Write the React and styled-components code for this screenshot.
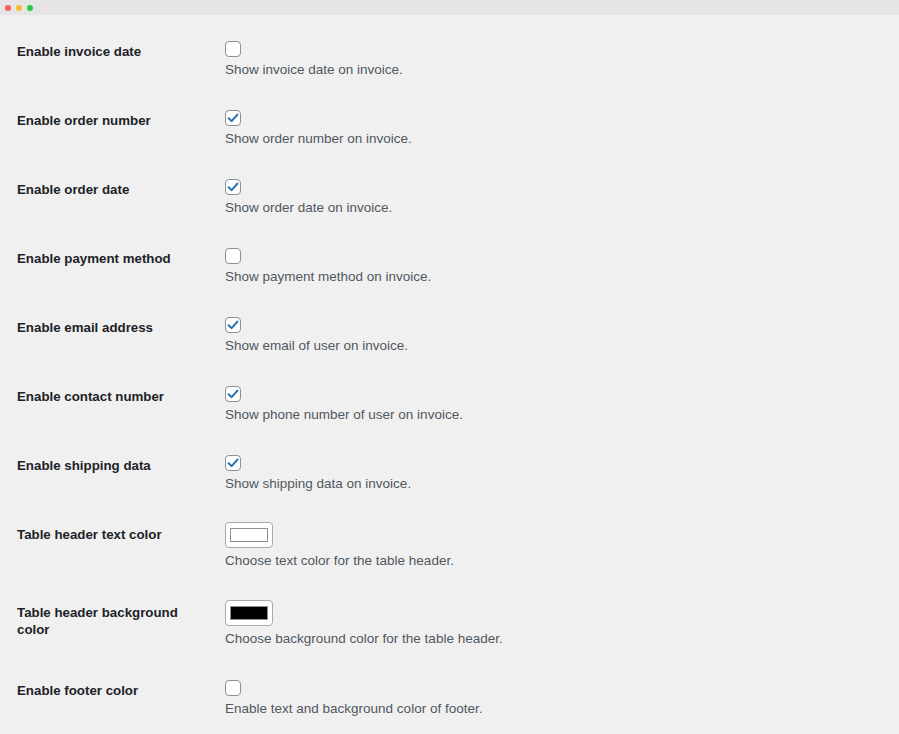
import React from "react";
import styled, { createGlobalStyle } from "styled-components";

const GlobalStyle = createGlobalStyle`
  html, body {
    margin: 0;
    padding: 0;
    background: #f0f0f1;
  }
  body {
    font-family: "Liberation Sans", Arial, sans-serif;
  }
`;

const settings = [
  { label: "Enable invoice date", type: "checkbox", checked: false, text: "Show invoice date on invoice." },
  { label: "Enable order number", type: "checkbox", checked: true, text: "Show order number on invoice." },
  { label: "Enable order date", type: "checkbox", checked: true, text: "Show order date on invoice." },
  { label: "Enable payment method", type: "checkbox", checked: false, text: "Show payment method on invoice." },
  { label: "Enable email address", type: "checkbox", checked: true, text: "Show email of user on invoice." },
  { label: "Enable contact number", type: "checkbox", checked: true, text: "Show phone number of user on invoice." },
  { label: "Enable shipping data", type: "checkbox", checked: true, text: "Show shipping data on invoice." },
  { label: "Table header text color", type: "color", color: "#ffffff", text: "Choose text color for the table header." },
  { label: "Table header background color", type: "color", color: "#000000", text: "Choose background color for the table header." },
  { label: "Enable footer color", type: "checkbox", checked: false, text: "Enable text and background color of footer." },
];

export default function App() {
  return (
    <>
      <GlobalStyle />
      <Window>
        <TitleBar>
          <Dot color="#ff5f57" />
          <Dot color="#febc2e" />
          <Dot color="#28c840" />
        </TitleBar>
        <SettingsTable>
          {settings.map((item) => (
            <Row key={item.label}>
              <Label>{item.label}</Label>
              <Field color={item.type === "color"}>
                {item.type === "checkbox" ? (
                  <Checkbox>
                    {item.checked && (
                      <svg width="14" height="14" viewBox="0 0 14 14">
                        <path
                          d="M2.6 7.2 L5.6 10.1 L11.4 3.6"
                          fill="none"
                          stroke="#2271b1"
                          strokeWidth="2"
                          strokeLinecap="round"
                          strokeLinejoin="round"
                        />
                      </svg>
                    )}
                  </Checkbox>
                ) : (
                  <ColorButton>
                    <ColorSwatch swatch={item.color} />
                  </ColorButton>
                )}
                <Description>{item.text}</Description>
              </Field>
            </Row>
          ))}
        </SettingsTable>
      </Window>
    </>
  );
}

const Window = styled.div`
  width: 899px;
  height: 734px;
  background: #f0f0f1;
  overflow: hidden;
  border-radius: 0 0 8px 8px;
`;

const TitleBar = styled.div`
  height: 15px;
  background: #e5e5e5;
  display: flex;
  align-items: center;
  gap: 5px;
  padding-left: 5px;
`;

const Dot = styled.span`
  width: 6px;
  height: 6px;
  border-radius: 50%;
  background: ${(props) => props.color};
`;

const SettingsTable = styled.div`
  display: flex;
  flex-direction: column;
  padding: 10px 0 0 17px;
`;

const Row = styled.div`
  display: flex;
  align-items: flex-start;
`;

const Label = styled.div`
  width: 180px;
  margin-right: 28px;
  padding-top: 18px;
  font-size: 13.3px;
  font-weight: 700;
  line-height: 17px;
  color: #1d2327;
`;

const Field = styled.div`
  display: flex;
  flex-direction: column;
  align-items: flex-start;
  padding: ${(props) => (props.color ? "14px 0 16px" : "16px 0 15px")};
`;

const Checkbox = styled.span`
  box-sizing: border-box;
  width: 16px;
  height: 16px;
  border: 1px solid #8c8f94;
  border-radius: 4px;
  background: #ffffff;
  display: flex;
  align-items: center;
  justify-content: center;
`;

const ColorButton = styled.span`
  box-sizing: border-box;
  width: 48px;
  height: 26px;
  border: 1px solid #a7aaad;
  border-radius: 4px;
  background: #ffffff;
  display: flex;
  align-items: center;
  justify-content: center;
`;

const ColorSwatch = styled.span`
  box-sizing: border-box;
  width: 38px;
  height: 14px;
  border: 1px solid #8c8f94;
  background: ${(props) => props.swatch};
`;

const Description = styled.div`
  margin-top: 4px;
  font-size: 13.5px;
  line-height: 18px;
  color: #50575e;
`;
